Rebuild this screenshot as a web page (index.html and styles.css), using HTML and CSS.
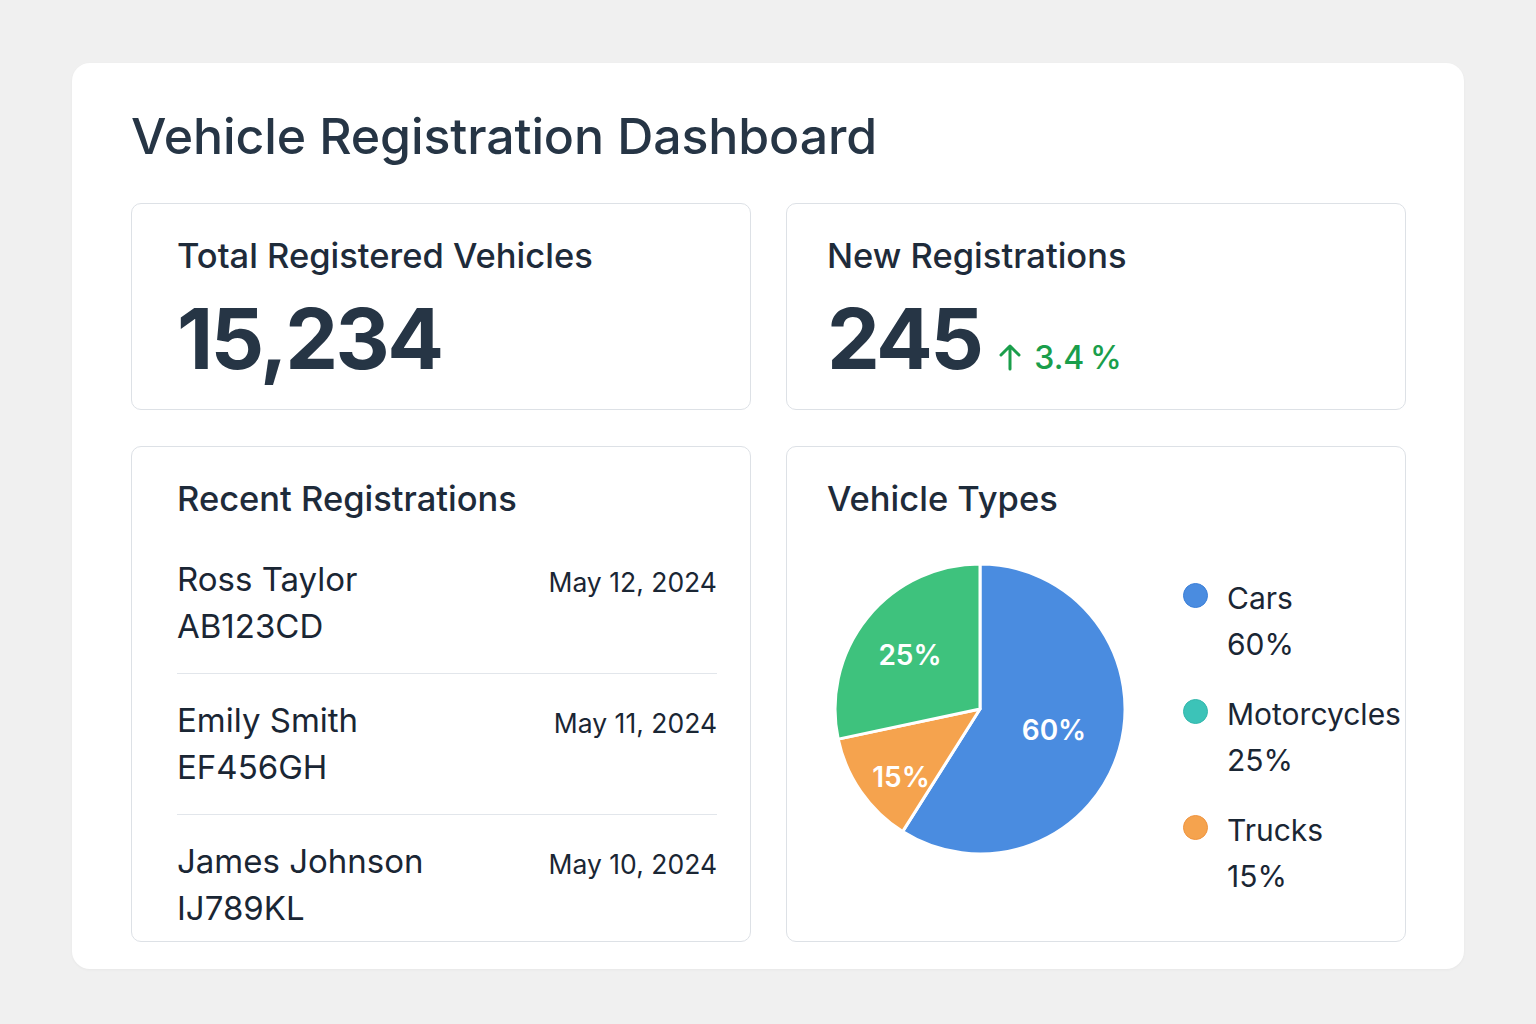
FILE: index.html
```html
<!DOCTYPE html>
<html lang="en">
<head>
<meta charset="utf-8">
<title>Vehicle Registration Dashboard</title>
<link rel="stylesheet" href="styles.css">
</head>
<body>
<main class="panel">
  <h1 class="page-title">Vehicle Registration Dashboard</h1>
  <div class="grid">
    <section class="card card-left stat">
      <h2 class="card-title">Total Registered Vehicles</h2>
      <div class="stat-row"><span class="stat-value">15,234</span></div>
    </section>
    <section class="card card-right stat">
      <h2 class="card-title">New Registrations</h2>
      <div class="stat-row">
        <span class="stat-value">245</span>
        <span class="trend">
          <svg class="trend-icon" viewBox="0 0 24 28" width="24" height="28" aria-hidden="true">
            <path d="M12 26 V3 M3 12 L12 3 L21 12" fill="none" stroke="#1a9e4b" stroke-width="3" stroke-linecap="round" stroke-linejoin="round"/>
          </svg>
          3.4&#8201;%
        </span>
      </div>
    </section>
    <section class="card card-left recent">
      <h2 class="card-title">Recent Registrations</h2>
      <ul class="reg-list">
        <li class="reg-row">
          <div class="reg-info"><div class="reg-name">Ross Taylor</div><div class="reg-plate">AB123CD</div></div>
          <div class="reg-date">May 12, 2024</div>
        </li>
        <li class="reg-row">
          <div class="reg-info"><div class="reg-name">Emily Smith</div><div class="reg-plate">EF456GH</div></div>
          <div class="reg-date">May 11, 2024</div>
        </li>
        <li class="reg-row">
          <div class="reg-info"><div class="reg-name">James Johnson</div><div class="reg-plate">IJ789KL</div></div>
          <div class="reg-date">May 10, 2024</div>
        </li>
      </ul>
    </section>
    <section class="card card-right types">
      <h2 class="card-title">Vehicle Types</h2>
      <div class="types-body">
        <svg class="pie" viewBox="0 0 292 292" width="292" height="292" aria-hidden="true">
          <path d="M146 146 L146 1 A145 145 0 1 1 68.6 268.6 Z" fill="#4a8ce0" stroke="#ffffff" stroke-width="3" stroke-linejoin="round"/>
          <path d="M146 146 L68.6 268.6 A145 145 0 0 1 4.2 176.1 Z" fill="#f5a34e" stroke="#ffffff" stroke-width="3" stroke-linejoin="round"/>
          <path d="M146 146 L4.2 176.1 A145 145 0 0 1 146 1 Z" fill="#3ec27d" stroke="#ffffff" stroke-width="3" stroke-linejoin="round"/>
          <text x="220" y="177" class="pie-label">60%</text>
          <text x="76" y="102" class="pie-label">25%</text>
          <text x="67" y="224" class="pie-label">15%</text>
        </svg>
        <ul class="legend">
          <li class="legend-item"><span class="dot dot-blue"></span><div><div class="legend-name">Cars</div><div class="legend-pct">60%</div></div></li>
          <li class="legend-item"><span class="dot dot-teal"></span><div><div class="legend-name">Motorcycles</div><div class="legend-pct">25%</div></div></li>
          <li class="legend-item"><span class="dot dot-orange"></span><div><div class="legend-name">Trucks</div><div class="legend-pct">15%</div></div></li>
        </ul>
      </div>
    </section>
  </div>
</main>
</body>
</html>
```
FILE: styles.css
```css
* { box-sizing: border-box; }
html, body { margin: 0; padding: 0; }
body {
  background: #f0f0f0;
  font-family: Inter, "Noto Sans", "Liberation Sans", sans-serif;
  color: #1e2b3a;
  padding: 63px 72px 55px;
}
.panel {
  background: #ffffff;
  border-radius: 18px;
  width: 1392px;
  height: 906px;
  padding: 43px 59px 26px;
  box-shadow: 0 1px 3px rgba(0,0,0,0.04);
}
.page-title {
  margin: 0;
  font-size: 50px;
  font-weight: 500;
  line-height: 60px;
  color: #263545;
  letter-spacing: -0.1px;
}
.grid {
  margin-top: 37px;
  display: grid;
  grid-template-columns: 620px 620px;
  grid-template-rows: 207px 496px;
  column-gap: 35px;
  row-gap: 36px;
}
.card {
  border: 1.5px solid #dde1e6;
  border-radius: 10px;
  background: #fff;
  position: relative;
}
.card-left { padding: 30px 33px 0 45px; }
.card-right { padding: 30px 33px 0 40px; }
.card-title {
  margin: 0;
  font-size: 34.5px;
  font-weight: 500;
  line-height: 44px;
  color: #1e2b3a;
}
.stat-row {
  display: flex;
  align-items: baseline;
  margin-top: 17px;
}
.stat-value {
  font-size: 84px;
  font-weight: 700;
  line-height: 88px;
  color: #263545;
  letter-spacing: -2.6px;
}
.trend {
  margin-left: 17px;
  color: #1a9e4b;
  font-size: 32px;
  font-weight: 500;
  display: inline-flex;
  align-items: baseline;
  gap: 12px;
}
.trend-icon { position: relative; top: 2px; }
.reg-list {
  list-style: none;
  margin: 21px 0 0;
  padding: 0;
}
.reg-row {
  display: flex;
  justify-content: space-between;
  align-items: flex-start;
  border-bottom: 1.5px solid #e2e6eb;
  padding: 14px 0 23px;
}
.reg-row + .reg-row { padding-top: 23px; }
.reg-row:last-child { border-bottom: none; }
.reg-name, .reg-plate {
  font-size: 33px;
  line-height: 47px;
  color: #1a2634;
}
.reg-date {
  font-size: 26.5px;
  line-height: 36px;
  padding-top: 8px;
  color: #1a2634;
}
.types-body {
  display: flex;
  align-items: flex-start;
  margin-top: 42px;
  padding-left: 7px;
}
.pie { display: block; flex: none; }
.pie-label {
  fill: #ffffff;
  font-family: Inter, "Noto Sans", sans-serif;
  font-size: 28px;
  font-weight: 600;
  text-anchor: middle;
}
.legend {
  list-style: none;
  margin: 12px 0 0 57px;
  padding: 0;
  display: flex;
  flex-direction: column;
  gap: 24px;
}
.legend-item {
  display: flex;
  align-items: flex-start;
  gap: 19px;
}
.dot {
  width: 25px;
  height: 25px;
  border-radius: 50%;
  flex: none;
  margin-top: 8px;
}
.dot-blue { background: #4a8ce0; border: 1px solid #3b7fd8; }
.dot-teal { background: #3cc3b8; border: 1px solid #33b7ac; }
.dot-orange { background: #f5a34e; border: 1px solid #ef9440; }
.legend-name, .legend-pct {
  font-size: 30px;
  line-height: 46px;
  color: #1a2634;
  white-space: nowrap;
}
```
